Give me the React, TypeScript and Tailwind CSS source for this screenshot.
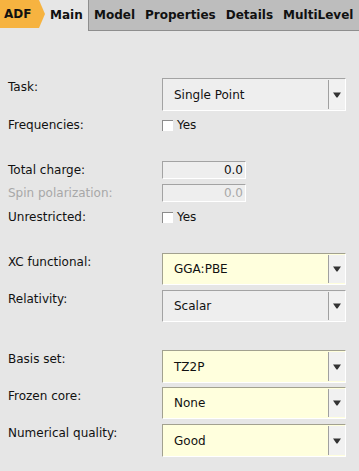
import React from 'react';

const font = { fontFamily: '"DejaVu Sans", Verdana, sans-serif' };

const Arrow = () => (
  <svg width="8" height="6" viewBox="0 0 8 6" className="block">
    <path d="M0 0.5 H8 L4.5 5.5 H3.5 Z" fill="#333" />
  </svg>
);

const Combo = ({ value, yellow }: { value: string; yellow?: boolean }) => (
  <div
    className={
      'flex h-full w-[184px] border-t border-l border-b border-r border-b-white border-r-white ' +
      (yellow ? 'bg-[#ffffdd] border-t-[#a2a18f] border-l-[#a2a18f]' : 'bg-[#eeeeee] border-t-[#a3a3a3] border-l-[#a3a3a3]')
    }
  >
    <div className="flex flex-1 items-center pl-[11px] text-[12px] text-[#111]">{value}</div>
    <div className="w-[1px] bg-[#a0a0a0] my-[1px]" />
    <div className="flex w-[16px] items-center justify-center bg-[#f1f1f1] my-[1px]">
      <Arrow />
    </div>
  </div>
);

const Field = ({ value, disabled }: { value: string; disabled?: boolean }) => (
  <div
    className={
      'flex h-[18px] w-[84px] items-center justify-end border-t border-l border-t-[#a3a3a3] border-l-[#a3a3a3] border-b border-r border-b-white border-r-white bg-[#eeeeee] pr-[2px] text-[12px] ' +
      (disabled ? 'text-[#a8a8a8]' : 'text-[#111]')
    }
  >
    {value}
  </div>
);

const Check = () => (
  <div className="flex items-center gap-[4px] text-[12px] text-[#111]">
    <div className="h-[11px] w-[11px] border-t border-l border-t-[#8c8c8c] border-l-[#8c8c8c] bg-white" />
    <span>Yes</span>
  </div>
);

const Row = ({
  label,
  h,
  mt,
  disabled,
  children,
}: {
  label: string;
  h: number;
  mt: string;
  disabled?: boolean;
  children: React.ReactNode;
}) => (
  <div className={'flex items-start ' + mt} style={{ height: h }}>
    <div className={'w-[162px] shrink-0 pl-[8px] text-[12px] leading-[18px] ' + (disabled ? 'text-[#a8a8a8]' : 'text-[#111]')}>
      {label}
    </div>
    <div className="flex h-full items-center">{children}</div>
  </div>
);

const tabs = ['Model', 'Properties', 'Details', 'MultiLevel'];

export default function App() {
  return (
    <div className="h-[471px] w-[359px] overflow-hidden bg-[#e6e6e6]" style={font}>
      <div className="flex h-[31px] items-start text-[12px] font-bold text-[#111]">
        <div className="flex h-[28px] w-[45px] items-center bg-[#f6b340] pl-[4px] [clip-path:polygon(0_0,39px_0,45px_14px,39px_28px,0_28px)]">
          ADF
        </div>
        <div className="flex h-[30px] w-[43px] items-center pl-[5px]">Main</div>
        <div className="flex h-[31px] flex-1 items-center border-l border-b border-[#8e8e8e] bg-[#bdbdbd] pb-[1px]">
          {tabs.map((t) => (
            <div key={t} className="px-[5px]">
              {t}
            </div>
          ))}
        </div>
      </div>

      <div className="pt-[47px]">
        <Row label="Task:" h={33} mt="">
          <Combo value="Single Point" />
        </Row>
        <Row label="Frequencies:" h={18} mt="mt-[5px]">
          <Check />
        </Row>
        <Row label="Total charge:" h={18} mt="mt-[27px]">
          <Field value="0.0" />
        </Row>
        <Row label="Spin polarization:" h={18} mt="mt-[5px]" disabled>
          <Field value="0.0" disabled />
        </Row>
        <Row label="Unrestricted:" h={18} mt="mt-[6px]">
          <Check />
        </Row>
        <Row label="XC functional:" h={32} mt="mt-[27px]">
          <Combo value="GGA:PBE" yellow />
        </Row>
        <Row label="Relativity:" h={32} mt="mt-[5px]">
          <Combo value="Scalar" />
        </Row>
        <Row label="Basis set:" h={33} mt="mt-[28px]">
          <Combo value="TZ2P" yellow />
        </Row>
        <Row label="Frozen core:" h={32} mt="mt-[4px]">
          <Combo value="None" yellow />
        </Row>
        <Row label="Numerical quality:" h={33} mt="mt-[5px]">
          <Combo value="Good" yellow />
        </Row>
      </div>
    </div>
  );
}
